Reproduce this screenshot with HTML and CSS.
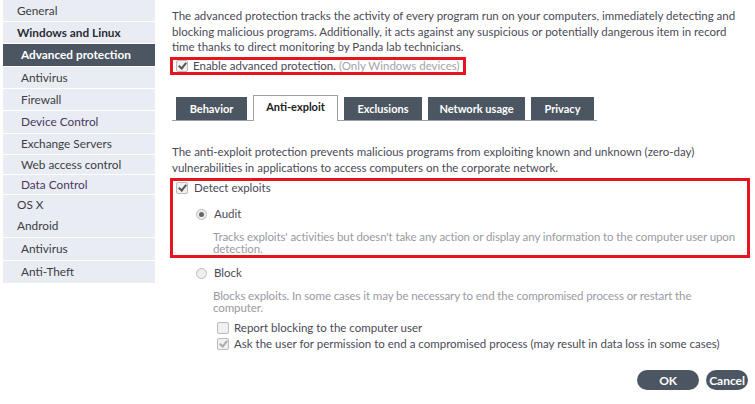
FILE: index.html
```html
<!DOCTYPE html>
<html lang="en">
<head>
    <meta charset="UTF-8">
    <meta name="viewport" content="width=device-width, initial-scale=1.0">
    <title>Advanced protection</title>
    <link rel="stylesheet" href="styles.css">
</head>
<body>
    <div class="page">
        <ul class="menu">
            <li class="top">General</li>
            <li class="top strong">Windows and Linux</li>
            <li class="sub active">Advanced protection</li>
            <li class="sub">Antivirus</li>
            <li class="sub">Firewall</li>
            <li class="sub tall visited">Device Control</li>
            <li class="sub mid">Exchange Servers</li>
            <li class="sub small">Web access control</li>
            <li class="sub small visited">Data Control</li>
            <li class="top small noline">OS X</li>
            <li class="top tall">Android</li>
            <li class="sub tall">Antivirus</li>
            <li class="sub tall">Anti-Theft</li>
        </ul>

        <div class="content">
            <p class="intro">The advanced protection tracks the activity of every program run on your computers, immediately detecting and blocking malicious programs. Additionally, it acts against any suspicious or potentially dangerous item in record time thanks to direct monitoring by Panda lab technicians.</p>

            <div class="enable highlight">
                <span class="check on"></span>
                <span>Enable advanced protection. <span class="muted">(Only Windows devices)</span></span>
            </div>

            <div class="tabs">
                <div class="tab w-behavior">Behavior</div>
                <div class="tab current">Anti-exploit</div>
                <div class="tab w-exclusions">Exclusions</div>
                <div class="tab w-network">Network usage</div>
                <div class="tab w-privacy">Privacy</div>
            </div>

            <p class="intro second">The anti-exploit protection prevents malicious programs from exploiting known and unknown (zero-day) vulnerabilities in applications to access computers on the corporate network.</p>

            <div class="highlight detect">
                <div class="option">
                    <span class="check on"></span>
                    <span>Detect exploits</span>
                </div>
                <div class="option mode">
                    <span class="radio on"></span>
                    <span>Audit</span>
                </div>
                <p class="desc">Tracks exploits' activities but doesn't take any action or display any information to the computer user upon detection.</p>
            </div>

            <div class="block">
                <div class="option mode">
                    <span class="radio"></span>
                    <span>Block</span>
                </div>
                <p class="desc">Blocks exploits. In some cases it may be necessary to end the compromised process or restart the computer.</p>
                <div class="option extra first">
                    <span class="check"></span>
                    <span>Report blocking to the computer user</span>
                </div>
                <div class="option extra">
                    <span class="check on faded"></span>
                    <span>Ask the user for permission to end a compromised process (may result in data loss in some cases)</span>
                </div>
            </div>

            <div class="actions">
                <button class="btn ok">OK</button>
                <button class="btn">Cancel</button>
            </div>
        </div>
    </div>
</body>
</html>
```

FILE: styles.css
```css
body {
    margin: 0;
    font-family: Lato, "Open Sans", sans-serif;
    font-size: 11.5px;
    color: #4a4a55;
    background: #fff;
}
.page {
    display: flex;
    padding-left: 3px;
}
.menu {
    list-style: none;
    margin: 0;
    padding: 0;
    width: 152px;
    background: #e9edf3;
    align-self: flex-start;
    font-size: 11.8px;
}
.menu li {
    height: 21px;
    line-height: 21px;
    border-bottom: 1px solid #fff;
    color: #3c3c44;
}
.menu li.tall {
    height: 22px;
    line-height: 22px;
}
.menu li.mid {
    height: 20px;
    line-height: 20px;
}
.menu li.small {
    height: 19px;
    line-height: 19px;
}
.menu li.noline {
    height: 20px;
    line-height: 20px;
    border-bottom: none;
}
.menu .top {
    padding-left: 14px;
}
.menu .sub {
    padding-left: 18px;
}
.menu .strong {
    font-weight: bold;
    color: #2c2c34;
}
.menu .visited {
    color: #4b3760;
}
.menu .active {
    background: #4b5662;
    color: #fff;
    font-weight: bold;
    height: 22px;
    line-height: 22px;
}
.content {
    width: 576px;
    margin-left: 17px;
    padding-top: 8px;
}
.intro {
    margin: 0;
    line-height: 15.5px;
}
.highlight {
    border: 3px solid #e5141e;
}
.enable {
    display: inline-flex;
    align-items: center;
    gap: 5px;
    height: 12px;
    line-height: 12px;
    margin: 2.5px 0 0 -2px;
    padding: 0 3px;
}
.muted {
    color: #a3a3ab;
}
.check {
    width: 10px;
    height: 10px;
    border: 1px solid #bbb;
    border-radius: 2px;
    background: #f0f0f0;
    display: inline-block;
    position: relative;
    flex: none;
}
.check.on::after {
    content: "";
    position: absolute;
    left: 3px;
    top: 0;
    width: 3px;
    height: 6px;
    border: solid #555;
    border-width: 0 2px 2px 0;
    transform: rotate(40deg);
}
.check.faded.on::after {
    border-color: #aaa;
}
.radio {
    width: 9px;
    height: 9px;
    border: 1px solid #bbb;
    border-radius: 50%;
    background: #eee;
    display: inline-block;
    position: relative;
    flex: none;
}
.radio.on::after {
    content: "";
    position: absolute;
    left: 2px;
    top: 2px;
    width: 5px;
    height: 5px;
    border-radius: 50%;
    background: #666;
}
.tabs {
    display: flex;
    gap: 6px;
    margin-top: 20px;
    padding-left: 4px;
    width: 421px;
    border-bottom: 1px solid #9aa1a8;
    align-items: flex-end;
}
.tab {
    background: #4b5662;
    color: #fff;
    font-weight: bold;
    font-size: 11px;
    height: 23px;
    line-height: 23px;
    text-align: center;
    white-space: nowrap;
}
.w-behavior {
    width: 71px;
}
.w-exclusions {
    width: 78px;
}
.w-network {
    width: 97px;
}
.w-privacy {
    width: 63px;
}
.tab.current {
    background: #fff;
    color: #222;
    width: 83px;
    border: 1px solid #9aa1a8;
    border-bottom: none;
    height: 25px;
    line-height: 21px;
    margin-bottom: -1px;
}
.intro.second {
    margin-top: 23px;
}
.option {
    display: flex;
    align-items: center;
    gap: 6px;
    height: 14px;
    line-height: 14px;
    white-space: nowrap;
}
.detect {
    margin: 3px -2px 0 -2px;
    padding: 0 0 0 3px;
}
.mode {
    padding-left: 20px;
    margin-top: 12px;
    gap: 7px;
}
.desc {
    margin: 10px 20px 0 41px;
    color: #9a9aa2;
    line-height: 12px;
    letter-spacing: -0.1px;
}
.detect .desc {
    margin-left: 37px;
    margin-right: 0;
}
.block .mode {
    margin-top: 8px;
    padding-left: 24px;
}
.extra {
    padding-left: 45px;
    margin-top: 2px;
    gap: 5px;
}
.extra.first {
    margin-top: 7px;
}
.actions {
    display: flex;
    justify-content: flex-end;
    gap: 7px;
    margin-top: 19px;
}
.btn {
    background: #4b5662;
    color: #fff;
    border: none;
    border-radius: 10px;
    height: 20px;
    font-family: inherit;
    font-weight: bold;
    font-size: 12px;
    padding: 0 3px;
    cursor: pointer;
}
.btn.ok {
    width: 62px;
}
```
